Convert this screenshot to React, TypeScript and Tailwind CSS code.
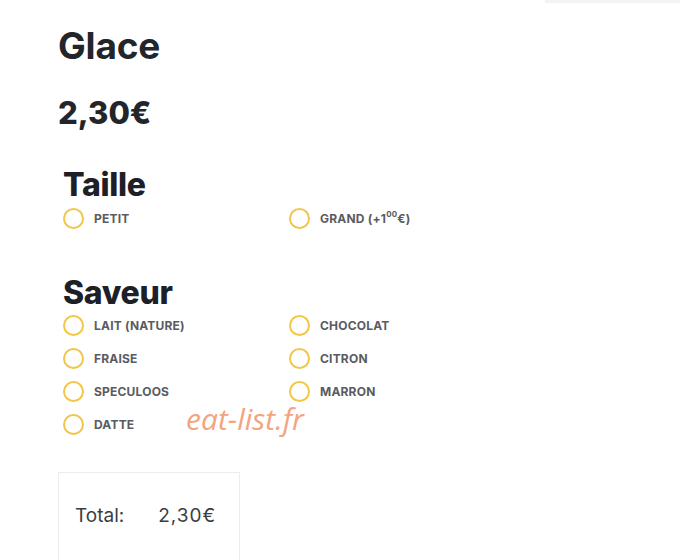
export default function App() {
  const taille = ["PETIT", "GRAND (+1.00€)"];
  const saveurs = ["LAIT (NATURE)", "CHOCOLAT", "FRAISE", "CITRON", "SPECULOOS", "MARRON", "DATTE"];

  const Radio = ({ label }: { label: string }) => (
    <label className="flex items-center h-[33px]">
      <span className="w-[21px] h-[21px] rounded-full border-2 border-[#f2c648] bg-white shrink-0" />
      <span className="ml-[10px] text-[12px] font-bold text-[#5a5b60] tracking-[0.2px]">
        {label === "GRAND (+1.00€)" ? (
          <>
            GRAND (+1<sup className="text-[8px] align-[2px]">00</sup>€)
          </>
        ) : (
          label
        )}
      </span>
    </label>
  );

  return (
    <main className="relative w-[700px] h-[560px] overflow-hidden bg-white" style={{ fontFamily: "Inter, 'Noto Sans', sans-serif" }}>
      <div className="absolute top-0 left-[545px] w-[135px] h-[3px] bg-[#f3f3f3]" />

      <div className="pl-[58px] pt-[24px]">
        <h1 className="text-[37px] leading-[44px] font-bold text-[#22252a] tracking-[-0.2px]">Glace</h1>
        <p className="mt-[26px] text-[31px] leading-[38px] font-extrabold text-[#22252a]">2,30€</p>

        <div className="pl-[5px] mt-[34px]">
          <h2 className="text-[32px] leading-[38px] font-extrabold text-[#1d2026] tracking-[-0.3px]">Taille</h2>
          <div className="grid grid-cols-[226px_1fr] -mt-[2px]">
            {taille.map((t) => (
              <Radio key={t} label={t} />
            ))}
          </div>

          <h2 className="mt-[39px] text-[32px] leading-[38px] font-extrabold text-[#1d2026] tracking-[-0.3px]">Saveur</h2>
          <div className="grid grid-cols-[226px_1fr] -mt-[3px]">
            {saveurs.map((s) => (
              <Radio key={s} label={s} />
            ))}
          </div>
        </div>

        <div className="mt-[31px] w-[182px] h-[100px] border border-[#ececec] flex items-center pl-[16px] pb-[12px] text-[19px] text-[#3a3d42]">
          <span>Total:</span>
          <span className="ml-[34px] tracking-[1px]">2,30€</span>
        </div>
      </div>

      <div
        className="absolute left-[186px] top-[396px] text-[30px] italic text-[#f4a47f]"
        style={{ fontFamily: "'Open Sans', sans-serif" }}
      >
        eat-list.fr
      </div>
    </main>
  );
}
